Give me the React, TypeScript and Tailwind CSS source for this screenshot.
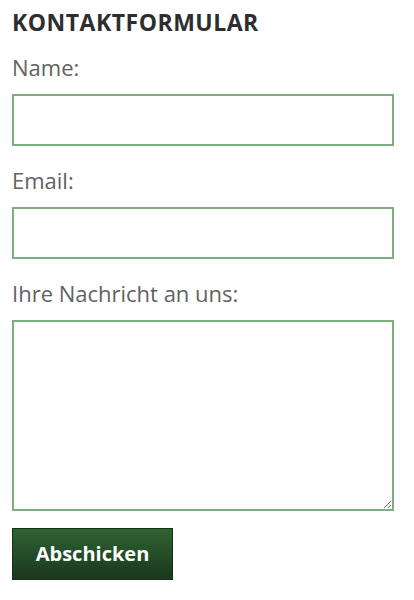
import { useState } from 'react';

export default function App() {
  const [name, setName] = useState('');
  const [email, setEmail] = useState('');
  const [message, setMessage] = useState('');

  const inputCls =
    'block w-[382px] border-2 border-[#7dae80] bg-white px-2 text-[18px] text-[#333] outline-none';

  return (
    <div className="min-h-screen bg-white pl-3 pt-2 font-['Open_Sans',sans-serif]">
      <form onSubmit={(e) => e.preventDefault()}>
        <h2 className="text-[23px] leading-[28px] font-bold tracking-[0.5px] text-[#2e2e2e]">
          KONTAKTFORMULAR
        </h2>

        <label className="mt-[19px] mb-[15px] block text-[22px] leading-[24px] text-[#626262]">
          Name:
        </label>
        <input
          type="text"
          value={name}
          onChange={(e) => setName(e.target.value)}
          className={`${inputCls} h-[52px]`}
        />

        <label className="mt-[22px] mb-[15px] block text-[22px] leading-[24px] text-[#626262]">
          Email:
        </label>
        <input
          type="email"
          value={email}
          onChange={(e) => setEmail(e.target.value)}
          className={`${inputCls} h-[52px]`}
        />

        <label className="mt-[22px] mb-[15px] block text-[22px] leading-[24px] text-[#626262]">
          Ihre Nachricht an uns:
        </label>
        <textarea
          value={message}
          onChange={(e) => setMessage(e.target.value)}
          className={`${inputCls} h-[191px] py-1`}
        />

        <button
          type="submit"
          className="mt-[17px] block h-[52px] w-[161px] border border-[#16301a] bg-gradient-to-b from-[#2f6333] to-[#1a381d] text-[20px] font-bold text-white"
        >
          Abschicken
        </button>
      </form>
    </div>
  );
}
